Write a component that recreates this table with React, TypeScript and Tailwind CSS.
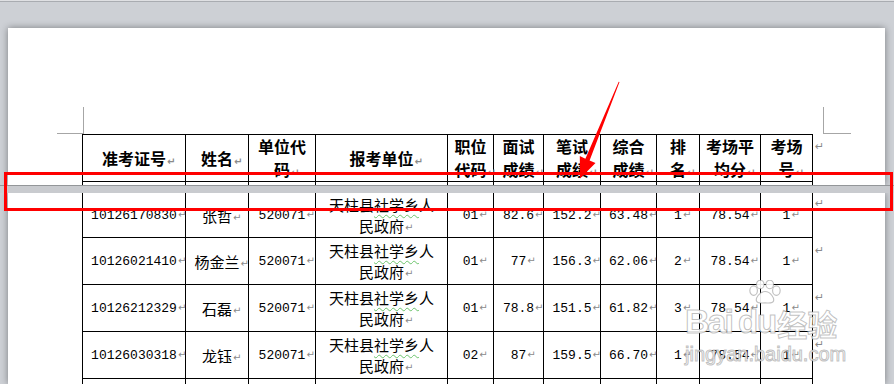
const header: string[][] = [
  ["准考证号"],
  ["姓名"],
  ["单位代", "码"],
  ["报考单位"],
  ["职位", "代码"],
  ["面试", "成绩"],
  ["笔试", "成绩"],
  ["综合", "成绩"],
  ["排", "名"],
  ["考场平", "均分"],
  ["考场", "号"],
]

const rows = [
  ["10126170830", "张哲", "520071", "", "01", "82.6", "152.2", "63.48", "1", "78.54", "1"],
  ["10126021410", "杨金兰", "520071", "", "01", "77", "156.3", "62.06", "2", "78.54", "1"],
  ["10126212329", "石磊", "520071", "", "01", "78.8", "151.5", "61.82", "3", "78.54", "1"],
  ["10126030318", "龙钰", "520071", "", "02", "87", "159.5", "66.70", "1", "78.54", "1"],
  ["10126150627", "杨秀", "520071", "", "02", "80.4", "150.1", "63.92", "2", "78.54", "1"],
]

// end-of-cell mark hangs after the text, centering ignores it (like Word)
function Marked(_props: { children: any }) {
  return (
    <span className="relative">
      {_props.children}
      <span className="absolute left-full bottom-[3px] ml-[1px] font-['DejaVu_Sans'] text-[10px] leading-none text-[#8a8a8a] [-webkit-text-stroke:0]">
        ↵
      </span>
    </span>
  )
}

function Cell(_props: { first: boolean; top?: boolean; h: string; children?: any }) {
  return (
    <div
      className={
        "flex flex-col items-center justify-center border-r border-b border-black " +
        (_props.first ? "border-l " : "") +
        (_props.top ? "border-t " : "") +
        _props.h
      }
    >
      {_props.children}
    </div>
  )
}

function Unit() {
  return (
    <div className="flex flex-col items-center font-['Noto_Sans_CJK_SC'] text-[15px] leading-[21px] text-black">
      <span>
        天柱县
        <span className="underline decoration-wavy decoration-[#6cc36c] decoration-1 underline-offset-[3px]">
          社学乡
        </span>
        人
      </span>
      <Marked>民政府</Marked>
    </div>
  )
}

function DataContent(_props: { value: string; index: number }) {
  if (_props.index === 3) return <Unit />
  const cjk = _props.index === 1
  return (
    <span
      className={
        cjk
          ? "font-['Noto_Sans_CJK_SC'] text-[15px] leading-[21px] text-black"
          : "font-['Liberation_Mono'] text-[13px] leading-[21px] text-black"
      }
    >
      <Marked>{_props.value}</Marked>
    </span>
  )
}

function RowEnd(_props: { h: string; pt: string }) {
  return (
    <div className={"flex justify-start pl-[2px] " + _props.h + " " + _props.pt}>
      <span className="font-['DejaVu_Sans'] text-[11px] leading-none text-[#8a8a8a]">↵</span>
    </div>
  )
}

export default function App() {
  return (
    <div className="relative w-[894px] h-[384px] overflow-hidden bg-[#cdd0d5]">
      {/* ruler edge */}
      <div className="h-[2px] bg-[#dfe0e3] border-b border-[#a9acb1]" />

      {/* page 1 */}
      <div className="mt-[26px] ml-[8px] w-[877px] h-[157px] bg-white shadow-[0_0_7px_rgba(0,0,0,0.4)] pt-[79px]">
        <div className="flex h-[27px]">
          <div className="ml-[49px] w-[27px] h-[27px] border-r border-b border-[#a6a6a6]" />
          <div className="ml-[739px] w-[28px] h-[27px] border-l border-b border-[#a6a6a6]" />
        </div>
        <div className="ml-[74px] grid grid-cols-[104px_63px_67px_132px_46px_50px_57px_56px_43px_61px_52px_24px]">
          {header.map((lines, i) => (
            <Cell key={i} first={i === 0} top h="h-[48px]">
              <div className="flex flex-col items-center font-['Noto_Sans_CJK_SC'] font-bold text-[16px] leading-[23px] text-black">
                {lines.map((l, j) =>
                  j === lines.length - 1 ? <Marked key={j}>{l}</Marked> : <span key={j}>{l}</span>
                )}
              </div>
            </Cell>
          ))}
          <RowEnd h="h-[48px]" pt="pt-[7px]" />
          {header.map((_, i) => (
            <div
              key={i}
              className={"h-[3px] border-r border-black " + (i === 0 ? "border-l" : "")}
            />
          ))}
          <div className="h-[3px]" />
        </div>
      </div>

      {/* page gap */}
      <div className="relative z-10 h-[8px] border-t border-[#939699] bg-[#c9cbcf]" />

      {/* page 2 */}
      <div className="ml-[8px] w-[877px] h-[191px] bg-white shadow-[0_0_7px_rgba(0,0,0,0.4)] overflow-hidden">
        <div className="ml-[74px] grid grid-cols-[104px_63px_67px_132px_46px_50px_57px_56px_43px_61px_52px_24px]">
          {rows.map((row, r) => (
            <>
              {row.map((v, i) => (
                <Cell key={r + "-" + i} first={i === 0} h={r === 0 ? "h-[45px]" : "h-[47px]"}>
                  <DataContent value={v} index={i} />
                </Cell>
              ))}
              <RowEnd key={"end" + r} h={r === 0 ? "h-[45px]" : "h-[47px]"} pt={r === 0 ? "pt-[5px]" : "pt-[7px]"} />
            </>
          ))}
        </div>
      </div>

      {/* red box annotation */}
      <div className="absolute left-[4px] top-[172px] w-[889px] h-[39px] border-[3px] border-[#ff0000] z-20" />

      {/* red arrow */}
      <svg className="absolute left-0 top-0 z-20" width="894" height="384" viewBox="0 0 894 384">
        <polygon
          points="619.5,82 589.6,160.6 595.5,163 580,178.5 579.8,156 585.4,158.8 618.7,81.7"
          fill="#ff0000"
        />
      </svg>

      {/* watermark */}
      <div className="absolute left-[685px] top-[286px] z-30 flex flex-col text-[rgba(255,255,255,0.9)] [-webkit-text-stroke:1px_rgba(140,140,140,0.55)]">
        <div className="relative flex items-end h-[52px]">
          <span className="font-['Liberation_Sans'] font-bold text-[34px] leading-none tracking-[-2px]">Bai</span>
          <div className="relative flex flex-col items-center ml-[6px]">
            <svg width="36" height="25" viewBox="0 0 38 26" className="absolute -top-[25px] left-[9px]">
              <g fill="rgba(255,255,255,0.9)" stroke="rgba(140,140,140,0.55)" strokeWidth="1.2">
                <ellipse cx="7" cy="11" rx="4" ry="5" />
                <ellipse cx="14" cy="4.5" rx="4" ry="4.5" />
                <ellipse cx="24" cy="4.5" rx="4" ry="4.5" />
                <ellipse cx="31" cy="11" rx="4" ry="5" />
                <path d="M19 12 C13 12 9 19 10 22 C11 25 15 24 19 24 C23 24 27 25 28 22 C29 19 25 12 19 12 Z" />
              </g>
            </svg>
            <span className="font-['Liberation_Sans'] font-bold text-[33px] leading-none tracking-[-1px]">du</span>
          </div>
          <span className="font-['Noto_Sans_CJK_SC'] font-bold text-[30px] leading-none ml-[1px]">经验</span>
        </div>
        <span className="mt-[6px] font-['Liberation_Sans'] text-[20px] leading-none">jingyan.baidu.com</span>
      </div>
    </div>
  )
}
